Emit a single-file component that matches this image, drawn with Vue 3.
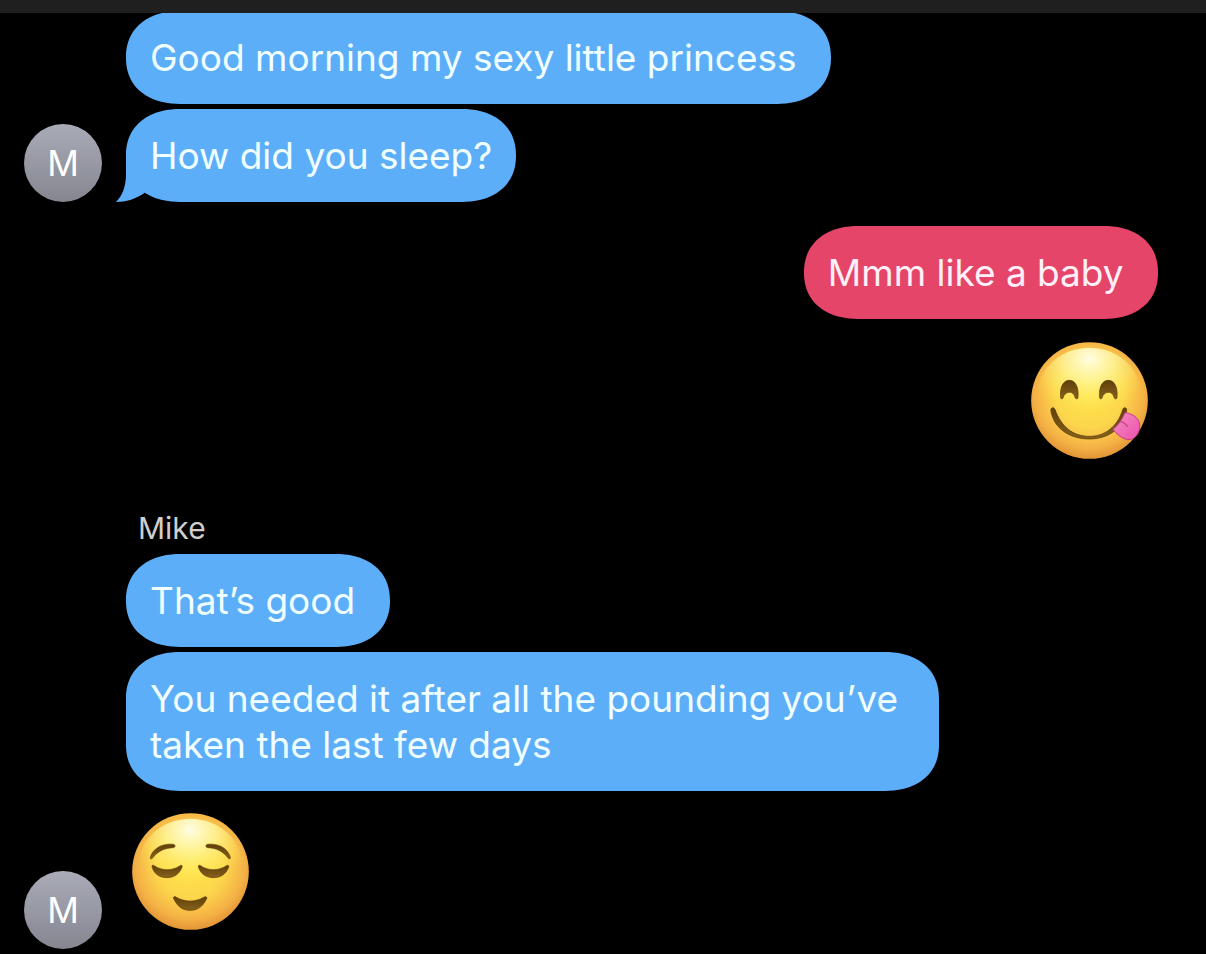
<script setup>
const contact = { name: 'Mike', initial: 'M' };

const groups = [
  {
    id: 1,
    mine: false,
    messages: [
      { id: 1, text: 'Good morning my sexy little princess\u00a0' },
      { id: 2, text: 'How did you sleep?', tail: true },
    ],
  },
  {
    id: 2,
    mine: true,
    messages: [
      { id: 3, text: 'Mmm like a baby\u00a0' },
      { id: 4, emoji: 'yum' },
    ],
  },
  {
    id: 3,
    mine: false,
    showName: true,
    messages: [
      { id: 5, text: 'That’s good\u00a0' },
      { id: 6, text: 'You needed it after all the pounding you’ve taken the last few days' },
      { id: 7, emoji: 'relieved' },
    ],
  },
];
</script>

<template>
  <div class="screen">
    <header class="topbar"></header>
    <main class="chat">
      <section
        v-for="group in groups"
        :key="group.id"
        class="group"
        :class="{ 'group--mine': group.mine, 'group--named': group.showName }"
      >
        <div v-if="!group.mine" class="avatar">{{ contact.initial }}</div>
        <div class="messages">
          <h2 v-if="group.showName" class="name">{{ contact.name }}</h2>
          <template v-for="message in group.messages" :key="message.id">
            <p v-if="message.text" class="bubble">
              <svg v-if="message.tail" class="tail" viewBox="0 0 40 48" aria-hidden="true">
                <path d="M10 0V20C10 33 6 42 0 48C10 48 19 45 27 40L40 28V0Z" />
              </svg>
              {{ message.text }}
            </p>

            <svg
              v-else-if="message.emoji === 'yum'"
              class="emoji"
              viewBox="64 51 351 351"
              role="img"
              aria-label="Face savoring food"
            >
              <defs>
                <radialGradient id="yum-face" cx="0.5" cy="0.44" r="0.58">
                  <stop offset="0" stop-color="#ffe347" />
                  <stop offset="0.5" stop-color="#fcd64c" />
                  <stop offset="0.8" stop-color="#f5b246" />
                  <stop offset="1" stop-color="#df8f33" />
                </radialGradient>
                <radialGradient id="yum-shine" cx="0.5" cy="0.12" r="0.62">
                  <stop offset="0" stop-color="#fffde4" />
                  <stop offset="0.4" stop-color="#fff9a4" stop-opacity="0.75" />
                  <stop offset="0.75" stop-color="#fff06a" stop-opacity="0.35" />
                  <stop offset="1" stop-color="#ffe34a" stop-opacity="0" />
                </radialGradient>
                <linearGradient id="yum-brown" x1="0" y1="0" x2="0" y2="1">
                  <stop offset="0" stop-color="#5f3f0a" />
                  <stop offset="1" stop-color="#87611c" />
                </linearGradient>
                <linearGradient id="yum-tongue" x1="0" y1="0" x2="1" y2="1">
                  <stop offset="0" stop-color="#f48fc2" />
                  <stop offset="1" stop-color="#ec50ad" />
                </linearGradient>
              </defs>
              <circle cx="239.5" cy="226.5" r="175" fill="url(#yum-face)" />
              <ellipse cx="239" cy="206" rx="154" ry="138" fill="url(#yum-shine)" />
              <g fill="url(#yum-brown)" stroke="#573806" stroke-width="2">
                <path d="M153 218C150 187 160 166 179 166C198 166 208 188 205 218C204 222 199 223 197 219C193 207 188 202 179 202C170 202 163 208 160 219C158 223 153 222 153 218Z" />
                <path d="M270 218C267 187 277 166 296 166C315 166 325 188 322 218C321 222 316 223 314 219C310 207 305 202 296 202C287 202 280 208 277 219C275 223 270 222 270 218Z" />
                <path d="M124 260C121 248 131 244 136 253C155 306 190 334 239 334C285 334 323 306 339 254C342 244 353 247 351 258C340 312 294 342 239 342C179 342 133 309 124 260Z" />
              </g>
              <path d="M346 263C362 264 387 275 390 298C392 323 377 345 354 344C335 340 319 326 310 313C326 301 337 284 346 263Z" fill="url(#yum-tongue)" stroke="#c73983" stroke-width="3" />
              <path d="M332 290Q344 291 353 304" fill="none" stroke="#c83f86" stroke-width="4" stroke-linecap="round" />
            </svg>

            <svg
              v-else
              class="emoji"
              viewBox="66 54 351 351"
              role="img"
              aria-label="Relieved face"
            >
              <defs>
                <radialGradient id="calm-face" cx="0.5" cy="0.44" r="0.58">
                  <stop offset="0" stop-color="#ffe347" />
                  <stop offset="0.5" stop-color="#fcd64c" />
                  <stop offset="0.8" stop-color="#f5b246" />
                  <stop offset="1" stop-color="#df8f33" />
                </radialGradient>
                <radialGradient id="calm-shine" cx="0.5" cy="0.12" r="0.62">
                  <stop offset="0" stop-color="#fffde4" />
                  <stop offset="0.4" stop-color="#fff9a4" stop-opacity="0.75" />
                  <stop offset="0.75" stop-color="#fff06a" stop-opacity="0.35" />
                  <stop offset="1" stop-color="#ffe34a" stop-opacity="0" />
                </radialGradient>
                <linearGradient id="calm-brown" x1="0" y1="0" x2="0" y2="1">
                  <stop offset="0" stop-color="#5f3f0a" />
                  <stop offset="1" stop-color="#87611c" />
                </linearGradient>
              </defs>
              <circle cx="241.5" cy="229.5" r="175" fill="url(#calm-face)" />
              <ellipse cx="241" cy="209" rx="154" ry="138" fill="url(#calm-shine)" />
              <g fill="url(#calm-brown)" stroke="#634108" stroke-width="2">
                <path d="M121 187C128 160 158 144 190 148C197 150 197 157 190 158C164 159 143 168 127 190C123 194 120 191 121 187Z" />
                <path d="M361 187C354 160 325 144 293 148C286 150 286 157 293 158C319 159 339 168 355 190C359 194 362 191 361 187Z" />
                <path d="M126 216C125 210 130 209 134 213C157 228 186 228 209 213C214 209 218 211 216 217C207 239 191 248 171 248C150 248 134 239 126 216Z" />
                <path d="M265 216C264 210 269 209 273 213C296 228 325 228 348 213C353 209 358 211 356 217C347 239 331 248 311 248C290 248 273 239 265 216Z" />
                <path d="M191 311C189 304 195 303 199 307C226 322 255 322 281 307C287 303 292 305 290 311C278 335 263 346 240 346C217 346 202 334 191 311Z" />
              </g>
            </svg>
          </template>
        </div>
      </section>
    </main>
  </div>
</template>

<style>
body {
  background-color: #000000;
}
</style>

<style scoped>
.screen {
  min-height: 100vh;
  background-color: #000000;
  font-family: Inter, 'Noto Sans', sans-serif;
}

.topbar {
  position: sticky;
  top: 0;
  z-index: 1;
  height: 13px;
  background-color: #1f1f1f;
}

.chat {
  display: flex;
  flex-direction: column;
  gap: 24px;
  margin-top: -2px;
  padding: 0 48px 5px 24px;
}

.group {
  display: flex;
  align-items: flex-end;
  gap: 24px;
}

.group--named {
  margin-top: 27px;
}

.avatar {
  display: flex;
  flex-shrink: 0;
  align-items: center;
  justify-content: center;
  width: 78px;
  height: 78px;
  border-radius: 50%;
  background: linear-gradient(#a9abb7, #858690);
  color: #ffffff;
  font-size: 35px;
}

.messages {
  display: flex;
  flex: 1;
  flex-direction: column;
  align-items: flex-start;
  gap: 5px;
}

.group--mine .messages {
  align-items: flex-end;
}

.name {
  margin: 0 0 3px 12px;
  color: #cfcfcf;
  font-size: 30px;
  font-weight: 400;
  line-height: 36px;
}

.bubble {
  position: relative;
  isolation: isolate;
  box-sizing: border-box;
  max-width: 813px;
  margin: 0;
  padding: 24px 24px 23px;
  border-radius: 54px / 46px;
  corner-shape: superellipse(1.14);
  background-color: #5daef9;
  color: #f0ffff;
  font-size: 37px;
  line-height: 46px;
}

.group--mine .bubble {
  background-color: #e54569;
  color: #fff0f8;
}

/* sits above the bubble colour but under its text */
.tail {
  position: absolute;
  bottom: 0;
  left: -10px;
  z-index: -1;
  width: 40px;
  height: 48px;
  fill: #5daef9;
}

.emoji {
  width: 117px;
  height: 117px;
  margin: 17px 6px 19px;
}

.group--mine .emoji {
  margin: 18px 10px 0;
}
</style>
